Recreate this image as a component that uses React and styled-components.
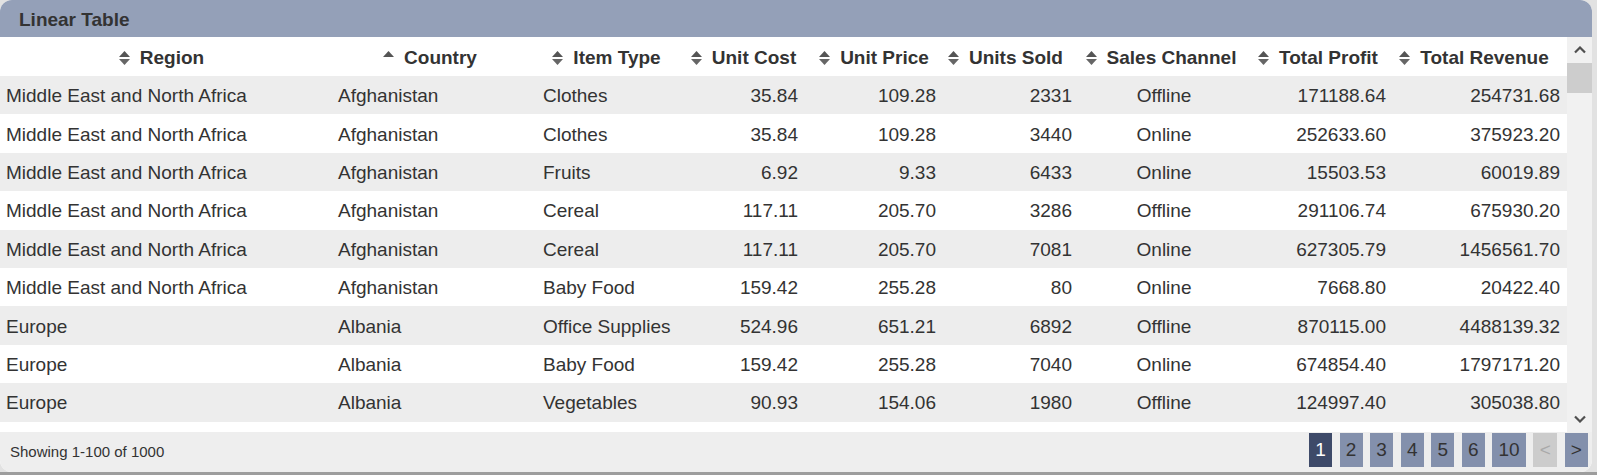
import React from 'react';
import styled, { createGlobalStyle } from 'styled-components';

const GlobalStyle = createGlobalStyle`
  html, body {
    margin: 0;
    padding: 0;
    background: #e2e2e2;
    font-family: "Liberation Sans", Arial, sans-serif;
    color: #333;
  }
`;

const Page = styled.div`
  width: 1597px;
  height: 475px;
  display: flex;
  flex-direction: column;
  overflow: hidden;
`;

const Panel = styled.div`
  width: 1592px;
  height: 472px;
  display: flex;
  flex-direction: column;
  background: #fff;
  border-radius: 12px;
  overflow: hidden;
`;

const BottomEdge = styled.div`
  height: 3px;
  background: #9d9d9d;
`;

const TitleBar = styled.div`
  height: 37px;
  flex-shrink: 0;
  background: #94a0b8;
  padding-left: 19px;
  font-size: 19px;
  font-weight: bold;
  line-height: 39px;
  color: #333;
`;

const Body = styled.div`
  height: 395px;
  flex-shrink: 0;
  display: flex;
`;

const TableArea = styled.div`
  flex: 1;
  overflow: hidden;
`;

const Table = styled.table`
  width: 1567px;
  table-layout: fixed;
  border-collapse: collapse;
  font-size: 19px;
`;

const HeadCell = styled.th`
  height: 39px;
  box-sizing: border-box;
  padding: 4px ${(p) => p.$nudge || 0}px 0 0;
  text-align: center;
  font-weight: bold;
  white-space: nowrap;
  background: #fff;
`;

const HeadInner = styled.span`
  display: inline-flex;
  align-items: center;
  gap: 10px;
`;

const Row = styled.tr`
  height: 38.4px;
  background: ${(p) => (p.$odd ? '#ededed' : '#fff')};
`;

const Cell = styled.td`
  box-sizing: border-box;
  padding: ${(p) => (p.$align === 'right' ? '2px 7px 0 6px' : '2px 6px 0')};
  text-align: ${(p) => p.$align || 'left'};
  white-space: nowrap;
  overflow: hidden;
`;

const ScrollTrack = styled.div`
  width: 25px;
  background: #f1f1f1;
  display: flex;
  flex-direction: column;
`;

const ScrollButton = styled.div`
  height: 26px;
  display: flex;
  align-items: center;
  justify-content: center;
`;

const ScrollThumb = styled.div`
  height: 30px;
  background: #cdcdcd;
`;

const ScrollSpace = styled.div`
  flex: 1;
`;

const Footer = styled.div`
  height: 40px;
  flex-shrink: 0;
  background: #eeeeee;
  display: flex;
  justify-content: space-between;
  align-items: flex-start;
  padding: 1px 4px 0 10px;
  box-sizing: border-box;
`;

const Info = styled.div`
  font-size: 15px;
  line-height: 38px;
  color: #333;
`;

const Pager = styled.div`
  display: flex;
  gap: 7.6px;
`;

const PageButton = styled.div`
  height: 34px;
  line-height: 34px;
  padding: 0 6.2px;
  font-size: 19px;
  background: ${(p) => (p.$active ? '#3e4a69' : p.$disabled ? '#cccccc' : '#8390ac')};
  color: ${(p) => (p.$active ? '#fff' : p.$disabled ? '#a9a9a9' : '#333')};
`;

const SortIcon = ({ only }) => (
  <svg width="11" height="14" viewBox="0 0 11 14">
    <polygon points="0,6 5.5,0 11,6" fill="#555" />
    {!only && <polygon points="0,8 11,8 5.5,14" fill="#666" />}
  </svg>
);

const Chevron = ({ down }) => (
  <svg width="12" height="8" viewBox="0 0 12 8">
    <polyline
      points={down ? '1,1.5 6,6.5 11,1.5' : '1,6.5 6,1.5 11,6.5'}
      fill="none"
      stroke="#505050"
      strokeWidth="2.2"
    />
  </svg>
);

const columns = [
  { label: 'Region', width: 332, nudge: 9 },
  { label: 'Country', width: 205, sorted: true, nudge: 9 },
  { label: 'Item Type', width: 145, nudge: 6 },
  { label: 'Unit Cost', width: 123, align: 'right' },
  { label: 'Unit Price', width: 138, align: 'right' },
  { label: 'Units Sold', width: 136, align: 'right', nudge: 11 },
  { label: 'Sales Channel', width: 170, align: 'center', nudge: 6 },
  { label: 'Total Profit', width: 144, align: 'right', nudge: 6 },
  { label: 'Total Revenue', width: 174, align: 'right', nudge: 12 },
];

const MENA = 'Middle East and North Africa';

const rows = [
  [MENA, 'Afghanistan', 'Clothes', '35.84', '109.28', '2331', 'Offline', '171188.64', '254731.68'],
  [MENA, 'Afghanistan', 'Clothes', '35.84', '109.28', '3440', 'Online', '252633.60', '375923.20'],
  [MENA, 'Afghanistan', 'Fruits', '6.92', '9.33', '6433', 'Online', '15503.53', '60019.89'],
  [MENA, 'Afghanistan', 'Cereal', '117.11', '205.70', '3286', 'Offline', '291106.74', '675930.20'],
  [MENA, 'Afghanistan', 'Cereal', '117.11', '205.70', '7081', 'Online', '627305.79', '1456561.70'],
  [MENA, 'Afghanistan', 'Baby Food', '159.42', '255.28', '80', 'Online', '7668.80', '20422.40'],
  ['Europe', 'Albania', 'Office Supplies', '524.96', '651.21', '6892', 'Offline', '870115.00', '4488139.32'],
  ['Europe', 'Albania', 'Baby Food', '159.42', '255.28', '7040', 'Online', '674854.40', '1797171.20'],
  ['Europe', 'Albania', 'Vegetables', '90.93', '154.06', '1980', 'Offline', '124997.40', '305038.80'],
];

const pages = ['1', '2', '3', '4', '5', '6', '10', '<', '>'];

export default function App() {
  return (
    <Page>
      <GlobalStyle />
      <Panel>
        <TitleBar>Linear Table</TitleBar>
        <Body>
          <TableArea>
            <Table>
              <colgroup>
                {columns.map((c) => (
                  <col key={c.label} style={{ width: c.width }} />
                ))}
              </colgroup>
              <thead>
                <tr>
                  {columns.map((c) => (
                    <HeadCell key={c.label} $nudge={c.nudge}>
                      <HeadInner>
                        <SortIcon only={c.sorted} />
                        {c.label}
                      </HeadInner>
                    </HeadCell>
                  ))}
                </tr>
              </thead>
              <tbody>
                {rows.map((r, i) => (
                  <Row key={i} $odd={i % 2 === 0}>
                    {r.map((v, j) => (
                      <Cell key={j} $align={columns[j].align}>
                        {v}
                      </Cell>
                    ))}
                  </Row>
                ))}
              </tbody>
            </Table>
          </TableArea>
          <ScrollTrack>
            <ScrollButton>
              <Chevron />
            </ScrollButton>
            <ScrollThumb />
            <ScrollSpace />
            <ScrollButton>
              <Chevron down />
            </ScrollButton>
          </ScrollTrack>
        </Body>
        <Footer>
          <Info>Showing 1-100 of 1000</Info>
          <Pager>
            {pages.map((p) => (
              <PageButton key={p} $active={p === '1'} $disabled={p === '<'}>
                {p}
              </PageButton>
            ))}
          </Pager>
        </Footer>
      </Panel>
      <BottomEdge />
    </Page>
  );
}
